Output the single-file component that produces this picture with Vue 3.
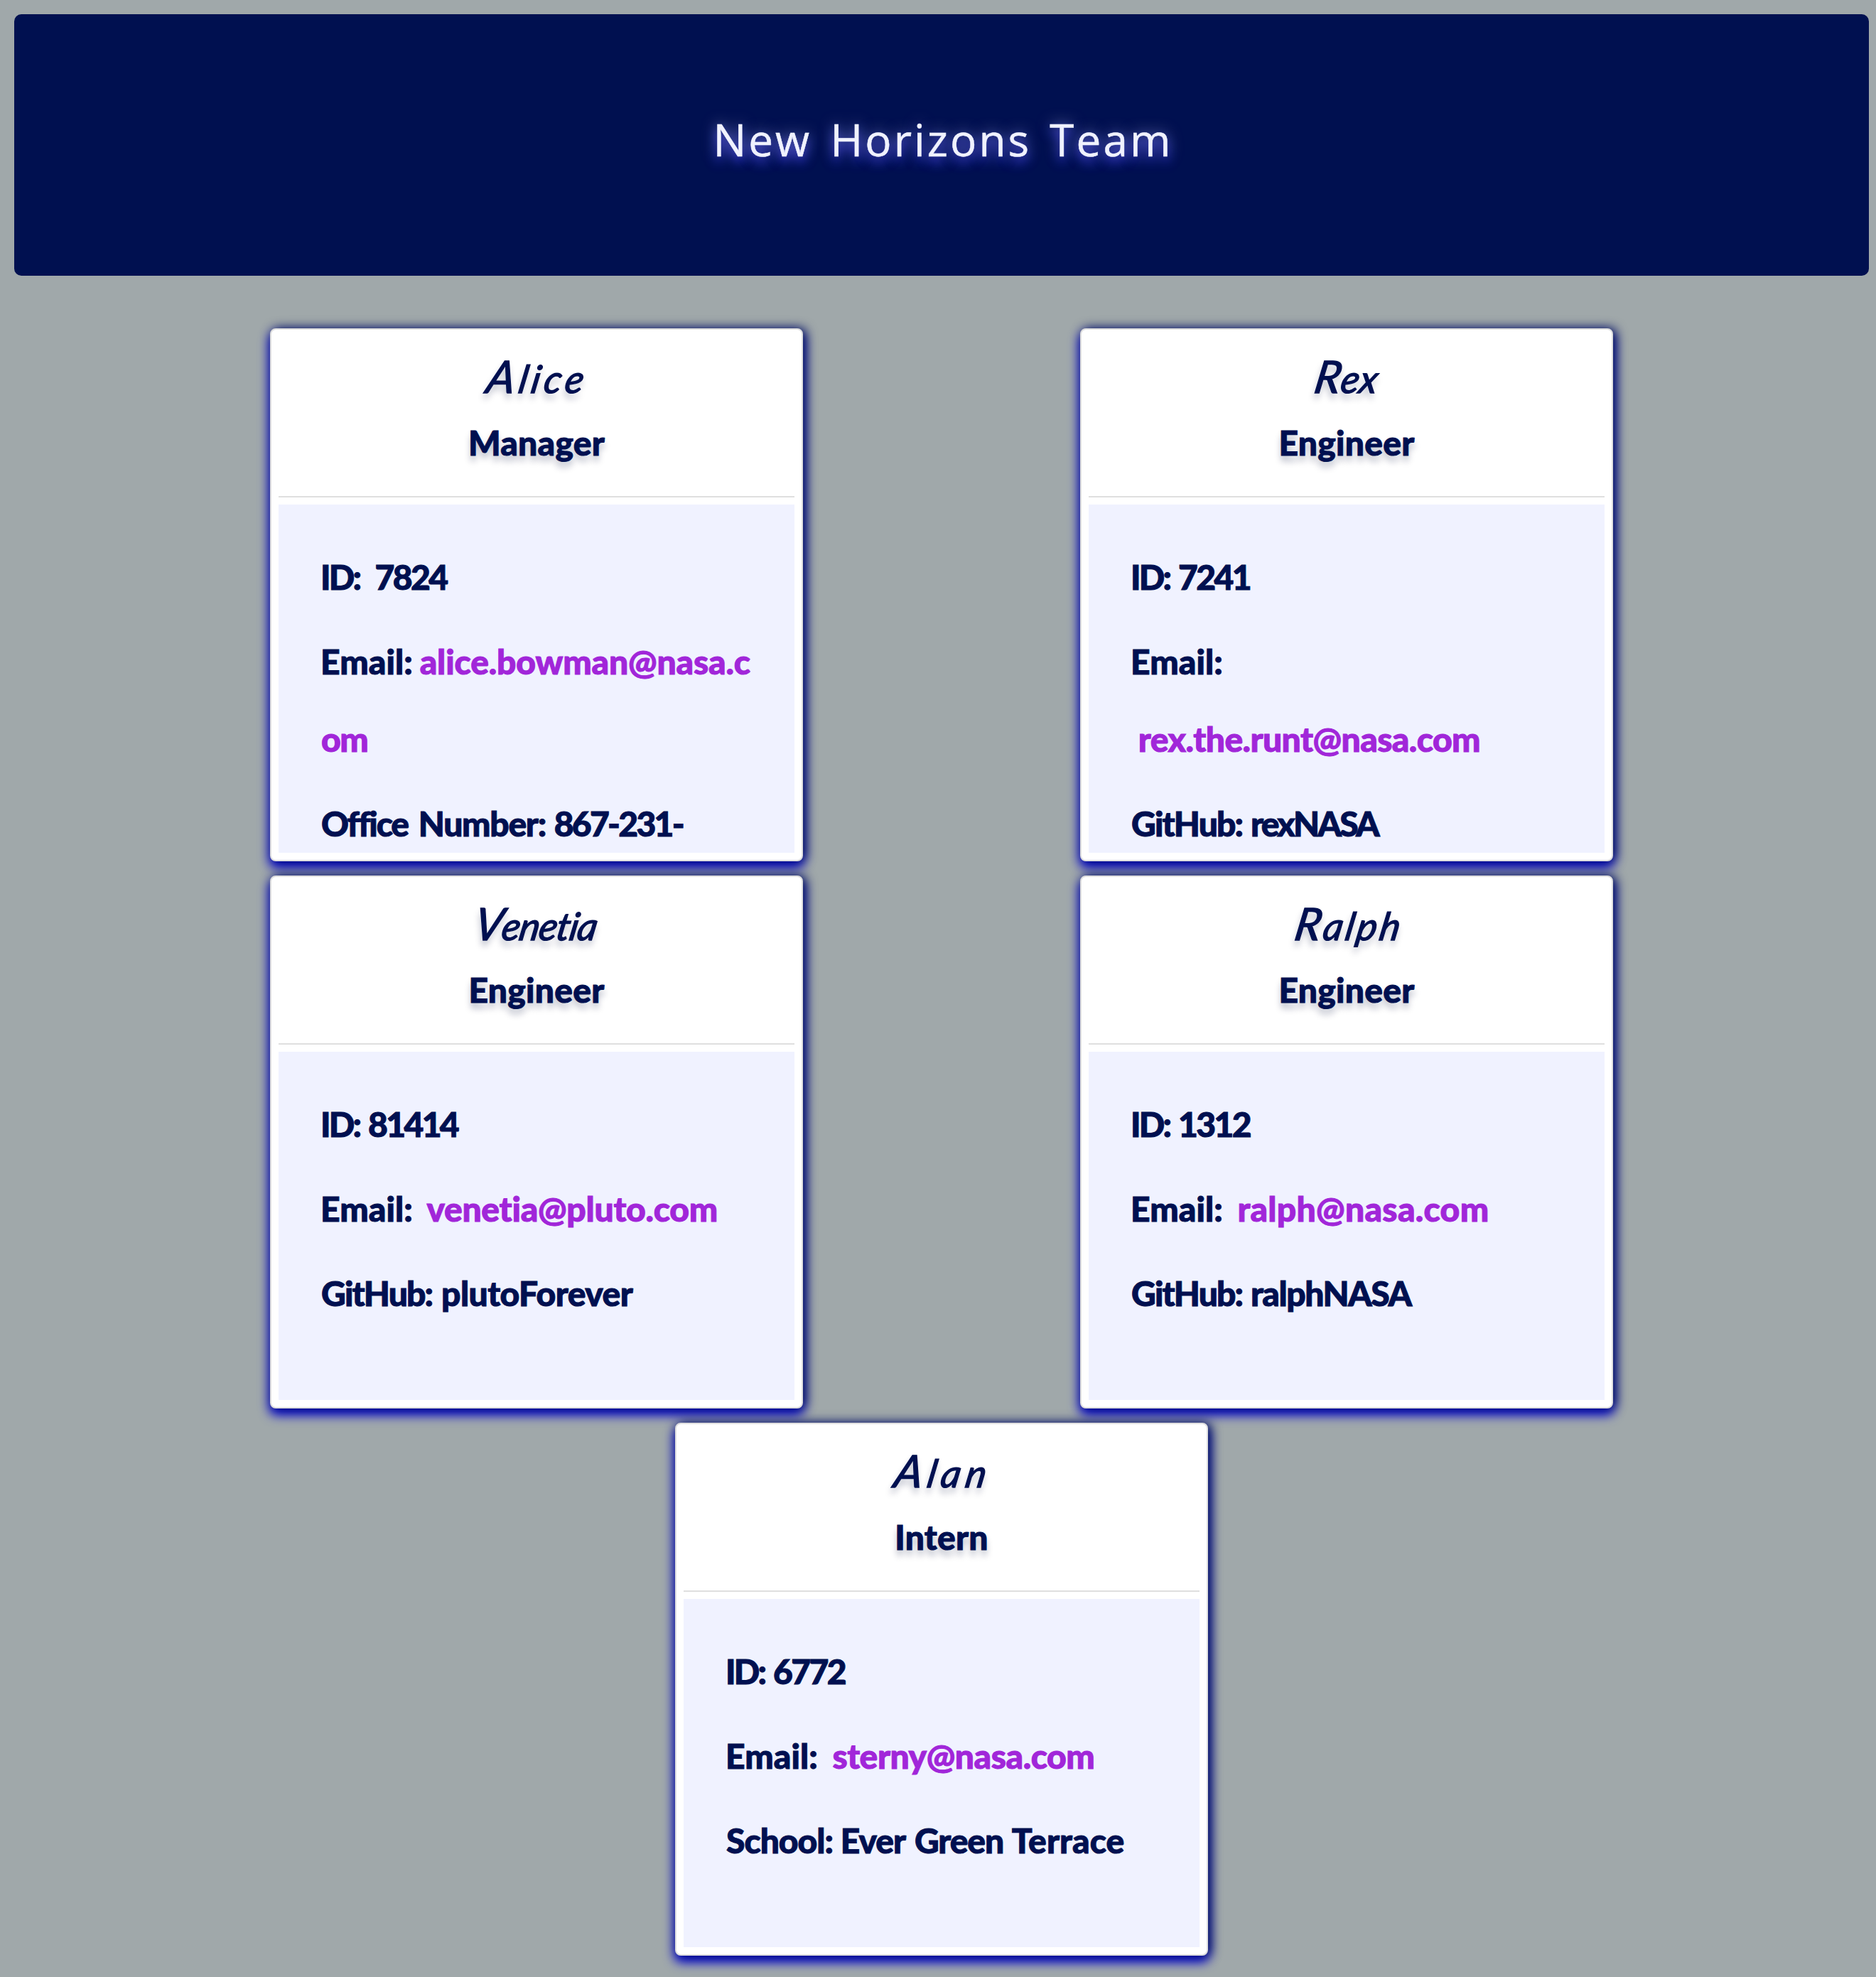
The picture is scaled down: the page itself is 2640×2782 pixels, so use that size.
<script setup>
// Each word: t = text, k = tracking in px, m = leading offset in px
const id = (t, gap = ' ') => ({ words: [{ t: 'ID:', k: -2.8, m: -1 }, { t, k: -2.6, m: 2, gap }] })
const label = { t: 'Email:', k: 0.1, m: -1 }
const github = { t: 'GitHub:', k: -1.83, m: 0 }

const team = [
  {
    name: 'Alice', nameTracking: 5.5, nameShift: -1, role: 'Manager',
    rows: [
      id('7824', '\u00a0\u00a0'),
      { words: [label, { t: 'alice.bowman@nasa.c', k: -0.14, m: 0, link: true }] },
      { words: [{ t: 'om', k: -1.5, m: 0, link: true }], wrapped: true },
      { words: [{ t: 'Office', k: -2.06, m: 0 }, { t: 'Number:', k: -1.27, m: 5 }, { t: '867-231-', k: -2.7, m: 2 }] },
    ],
  },
  {
    name: 'Rex', nameTracking: 0.5, nameShift: 0, role: 'Engineer',
    rows: [
      id('7241'),
      { words: [label] },
      { words: [{ t: 'rex.the.runt@nasa.com', k: -0.57, m: 0, link: true, gap: '\u00a0' }], wrapped: true },
      { words: [github, { t: 'rexNASA', k: -2.8, m: 2 }] },
    ],
  },
  {
    name: 'Venetia', nameTracking: -1, nameShift: 0, role: 'Engineer',
    rows: [
      id('81414'),
      { words: [label, { t: 'venetia@pluto.com', k: -0.25, m: 0, link: true, gap: '\u00a0\u00a0' }] },
      { words: [github, { t: 'plutoForever', k: -0.52, m: 3 }] },
    ],
  },
  {
    name: 'Ralph', nameTracking: 3.6, nameShift: 2, role: 'Engineer',
    rows: [
      id('1312'),
      { words: [label, { t: 'ralph@nasa.com', k: 0.3, m: 1, link: true, gap: '\u00a0\u00a0' }] },
      { words: [github, { t: 'ralphNASA', k: -1.45, m: 2 }] },
    ],
  },
  {
    name: 'Alan', nameTracking: 7, nameShift: -1, role: 'Intern',
    rows: [
      id('6772'),
      { words: [label, { t: 'sterny@nasa.com', k: -0.45, m: 1, link: true, gap: '\u00a0\u00a0' }] },
      { words: [{ t: 'School:', k: -1, m: 0 }, { t: 'Ever', k: -1, m: 1 }, { t: 'Green', k: -1.1, m: 3 }, { t: 'Terrace', k: 0.1, m: 2 }] },
    ],
  },
]

const gapBefore = (word, i) => word.gap ?? (i ? ' ' : '')
</script>

<template>
  <div class="page">
    <header class="banner"><h1>New Horizons Team</h1></header>
    <main class="team">
      <article v-for="person in team" :key="person.name" class="card">
        <div class="head">
          <h2 :style="{ letterSpacing: person.nameTracking + 'px', textIndent: person.nameTracking + person.nameShift * 2 + 'px' }">{{ person.name }}</h2>
          <h3>{{ person.role }}</h3>
        </div>
        <div class="details">
          <p v-for="(row, r) in person.rows" :key="r" :class="{ wrapped: row.wrapped }"><template v-for="(word, i) in row.words" :key="i">{{ gapBefore(word, i) }}<span :class="{ link: word.link }" :style="{ letterSpacing: word.k + 'px', marginLeft: word.m + 'px' }">{{ word.t }}</span></template></p>
        </div>
      </article>
    </main>
  </div>
</template>

<style>
body {
  background: #a0a8aa;
}
</style>

<style scoped>
.page {
  box-sizing: border-box;
  width: 2640px;
  height: 2782px;
  padding: 20px 10px 0 20px;
  overflow: hidden;
  background: #a0a8aa;
  color: #001050;
  font-family: Lato, "Open Sans", sans-serif;
}
.banner {
  box-sizing: border-box;
  height: 368px;
  padding-top: 126px;
  border-radius: 10px;
  background: #001050;
  text-align: center;
}
h1, h2, h3, p {
  margin: 0;
}
h1 {
  color: #f0f2ff;
  font: 400 62px/100px "Open Sans", sans-serif;
  letter-spacing: 3.1px;
  word-spacing: 7px;
  text-indent: 4px;
  -webkit-text-stroke: 0.5px #f0f2ff;
  text-shadow: 0 0 20px rgba(240, 242, 255, 0.5), 0 8px 16px #2020e0;
}
.team {
  display: flex;
  flex-wrap: wrap;
  justify-content: space-around;
  width: 2280px;
  margin: 64px 0 0 165px;
}
.card {
  box-sizing: border-box;
  width: 750px;
  height: 750px;
  margin: 10px;
  padding: 10px;
  border: 2px solid #dfdfdf;
  border-radius: 8px;
  background: #fff;
  box-shadow: 4px 0 16px #001050, 0 8px 16px 1px #0000e0;
}
.head {
  box-sizing: border-box;
  height: 226px;
  padding-top: 19px;
  border-bottom: 2px solid #dfdfdf;
  text-align: center;
  text-shadow: 0 8px 10px rgba(0, 16, 60, 0.27);
}
h2 {
  font-size: 54px;
  font-style: italic;
  font-weight: 400;
  line-height: 80px;
  transform: skewX(-10deg);
  -webkit-text-stroke: 1.4px #001050;
}
h2::first-letter {
  font-size: 63px;
  line-height: 1px;
}
h3 {
  margin-top: 20px;
  font-size: 48px;
  font-weight: 900;
  line-height: 60px;
  letter-spacing: 0.25px;
  -webkit-text-stroke: 1px #001050;
}
.details {
  box-sizing: border-box;
  height: 490px;
  margin-top: 10px;
  padding: 37px 0 0 60px;
  overflow: hidden;
  background: #f0f2ff;
  font-size: 48px;
  font-weight: 900;
  line-height: 109px;
  word-spacing: -1.7px;
  white-space: pre;
  -webkit-text-stroke: 1px #001050;
}
.details p {
  margin-top: 10px;
}
.details p.wrapped {
  margin-top: 0;
}
.link {
  color: #a126d9;
  -webkit-text-stroke-color: #a126d9;
}
</style>
